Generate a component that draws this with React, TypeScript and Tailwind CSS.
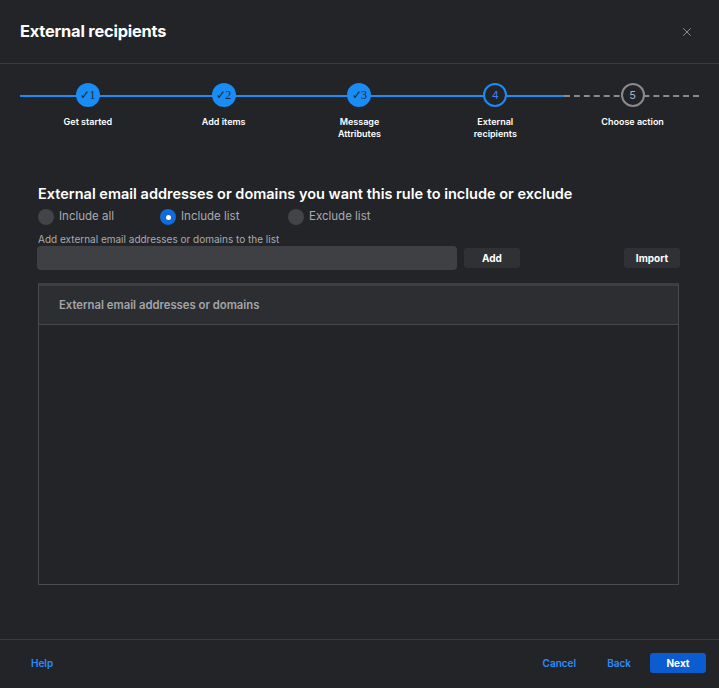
import React, { useState } from 'react';
import { X } from 'lucide-react';

type StepState = 'done' | 'current' | 'todo';

interface Step {
  label: string[];
  state: StepState;
}

const steps: Step[] = [
  { label: ['Get started'], state: 'done' },
  { label: ['Add items'], state: 'done' },
  { label: ['Message', 'Attributes'], state: 'done' },
  { label: ['External', 'recipients'], state: 'current' },
  { label: ['Choose action'], state: 'todo' },
];

const StepDot: React.FC<{ n: number; state: StepState }> = ({ n, state }) => {
  if (state === 'done') {
    return (
      <div className="w-6 h-6 rounded-full bg-[#1a8cf5] flex items-center justify-center text-[#1c2a3a] text-[12px] leading-none font-['Liberation_Serif',serif]">
        <span className="-mr-px">✓</span>
        <span>{n}</span>
      </div>
    );
  }
  if (state === 'current') {
    return (
      <div className="w-6 h-6 rounded-full bg-[#232427] border-2 border-[#1a8cf5] flex items-center justify-center text-[11px] text-[#3b82f6]">
        {n}
      </div>
    );
  }
  return (
    <div className="w-6 h-6 rounded-full bg-[#232427] border-2 border-[#8a8a8c] flex items-center justify-center text-[11px] text-[#a8b4c4]">
      {n}
    </div>
  );
};

const Stepper: React.FC = () => (
  <div className="relative mx-5 mt-[19px] h-[64px]">
    {/* track behind the dots */}
    <div className="absolute top-[12px] left-0 w-[544px] h-[2px] bg-[#1a8cf5]" />
    <div className="absolute top-[12px] left-[544px] right-0 h-0 border-t-2 border-dashed border-[#8a8a8c]" />
    <div className="relative grid grid-cols-5">
      {steps.map((s, i) => (
        <div key={i} className={i === 4 ? 'flex flex-col items-center pl-[3px]' : 'flex flex-col items-center'}>
          <StepDot n={i + 1} state={s.state} />
          <div className="mt-[9px] text-center text-[9px] leading-[12px] font-semibold text-white">
            {s.label.map((l) => (
              <div key={l}>{l}</div>
            ))}
          </div>
        </div>
      ))}
    </div>
  </div>
);

const Radio: React.FC<{ checked: boolean; label: string; onClick: () => void }> = ({ checked, label, onClick }) => (
  <button onClick={onClick} className="flex items-center gap-[5px] text-[11.5px] text-[#a9abb0]">
    {checked ? (
      <span className="w-4 h-4 rounded-full bg-[#0f6cdb] flex items-center justify-center">
        <span className="w-[5px] h-[5px] rounded-full bg-white" />
      </span>
    ) : (
      <span className="w-4 h-4 rounded-full bg-[#434447]" />
    )}
    {label}
  </button>
);

export default function App() {
  const [mode, setMode] = useState('list');
  const [value, setValue] = useState('');

  return (
    <div className="w-[719px] h-[688px] bg-[#232427] flex flex-col font-['Inter',sans-serif] text-white">
      <div className="flex items-center justify-between h-[64px] px-5 border-b border-[#3a3b3e]">
        <h1 className="text-[16.4px] font-bold tracking-[-0.2px]">External recipients</h1>
        <X className="w-[14px] h-[14px] text-[#9a9ca0] mr-[5px]" strokeWidth={1.5} />
      </div>

      <Stepper />

      <div className="flex-1 pl-[38px] pr-[40px] pt-[38px]">
        <h2 className="text-[14.5px] font-semibold leading-[18px]">
          External email addresses or domains you want this rule to include or exclude
        </h2>
        <div className="flex items-center mt-[5px] h-[18px]">
          <div className="w-[122px]">
            <Radio checked={mode === 'all'} label="Include all" onClick={() => setMode('all')} />
          </div>
          <div className="w-[128px]">
            <Radio checked={mode === 'list'} label="Include list" onClick={() => setMode('list')} />
          </div>
          <Radio checked={mode === 'exclude'} label="Exclude list" onClick={() => setMode('exclude')} />
        </div>
        <div className="mt-[7px] text-[10px] leading-[12px] text-[#a9abb0]">
          Add external email addresses or domains to the list
        </div>
        <div className="flex items-center mt-[1px] -ml-px">
          <input
            value={value}
            onChange={(e) => setValue(e.target.value)}
            className="w-[420px] h-[24px] rounded-[4px] bg-[#3f4043] outline-none px-2 text-[12px] text-white"
          />
          <button className="ml-[7px] w-[56px] h-[20px] rounded-[3px] bg-[#303134] text-[10px] font-bold">
            Add
          </button>
          <div className="flex-1" />
          <button className="w-[56px] h-[20px] rounded-[3px] bg-[#303134] text-[10px] font-bold -mr-px">
            Import
          </button>
        </div>

        <div className="mt-[13px] h-[302px] border border-[#4a4b4e] border-t-[3px] border-t-[#3d3e41] flex flex-col">
          <div className="h-[39px] bg-[#2d2e31] border-b border-[#47484b] flex items-center px-5 text-[11.3px] font-semibold text-[#a3a5aa]">
            External email addresses or domains
          </div>
          <div className="flex-1" />
        </div>
      </div>

      <div className="h-[49px] border-t border-[#3a3b3e] flex items-center pl-[31px] pr-[13px] pb-[2px] text-[10px] font-semibold">
        <button className="text-[#2b8cff]">Help</button>
        <div className="flex-1" />
        <button className="text-[#2b8cff]">Cancel</button>
        <button className="ml-[31px] text-[#2b8cff]">Back</button>
        <button className="ml-[19px] w-[56px] h-[20px] rounded-[3px] bg-[#0b5cd0] text-white font-bold">
          Next
        </button>
      </div>
    </div>
  );
}
